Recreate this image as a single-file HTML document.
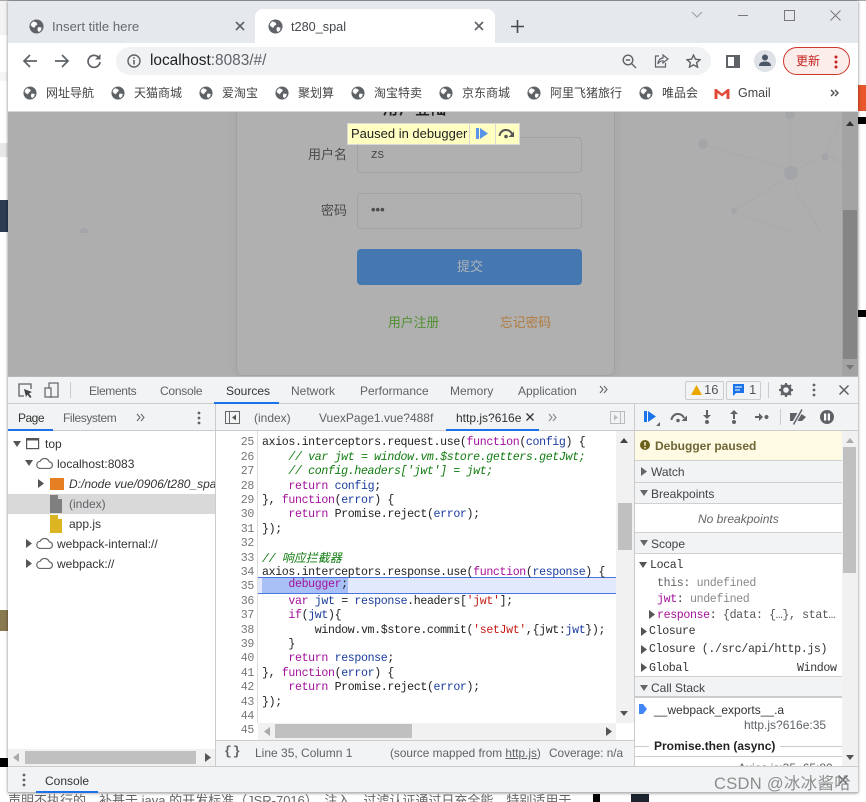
<!DOCTYPE html>
<html><head><meta charset="utf-8"><style>
html,body{margin:0;padding:0;width:866px;height:802px;overflow:hidden;background:#fff}
body{position:relative;font-family:"Liberation Sans","Noto Sans CJK SC",sans-serif;font-size:12px;color:#333}
.a,.t,svg{position:absolute}
.t{white-space:nowrap;line-height:16px}
.c{position:absolute;left:262px;margin-top:2px;white-space:pre;font:11.6px/14px "Liberation Mono","Noto Sans CJK SC",monospace;letter-spacing:-.36px;color:#222}
.n{position:absolute;left:225px;margin-top:2px;width:29px;text-align:right;font:11.6px/14px "Liberation Mono",monospace;letter-spacing:-.36px;color:#777}
.k{color:#a3109a}.v{color:#1a3d9c}.g{color:#107c10;font-style:italic}.s{color:#c41a16}
.m{position:absolute;white-space:pre;font:11.6px/14px "Liberation Mono",monospace;letter-spacing:-.36px;color:#333}
.h{position:absolute;left:635px;width:207px;background:#f1f3f4;border-top:1px solid #d0d0d0;border-bottom:1px solid #d0d0d0}
</style></head><body>
<svg width="0" height="0" style="left:0;top:0"><defs>
<symbol id="globe" viewBox="0 0 16 16"><circle cx="8" cy="8" r="7.5" fill="#5f6368"/><path d="M5 2.5l3 1.2 1 2-2 1.500-1.500 2.300L3 8 1.800 6.300C2.300 4.500 3.400 3.200 5 2.500zM10 8.500l3.500.7-.8 3-2.200 1.700-1.200-1.500-.2-2.200z" fill="#fff"/></symbol>
<symbol id="cloud" viewBox="0 0 16 10"><path d="M4 9.500h8.500a3 3 0 0 0 .3-6A4.500 4.500 0 0 0 4.500 3 3.300 3.300 0 0 0 4 9.500z" fill="#fff" stroke="#666" stroke-width="1.100"/></symbol>
</defs></svg>

<!-- outside bits -->
<div class="a" style="left:0;top:0;width:866px;height:1px;background:#a5a8ab"></div>
<div class="a" style="left:0;top:1px;width:8px;height:34px;background:#f3f3f3"></div>
<div class="a" style="left:0;top:72px;width:8px;height:9px;background:#f6f6f6"></div>
<div class="a" style="left:0;top:143px;width:8px;height:14px;background:#e8e8e8"></div>
<div class="a" style="left:0;top:200px;width:8px;height:32px;background:#2c3a52"></div>
<div class="a" style="left:0;top:610px;width:8px;height:21px;background:#8a7a50"></div>
<div class="a" style="left:0;top:758px;width:8px;height:9px;background:#000"></div>
<div class="a" style="left:858px;top:85px;width:8px;height:26px;background:#e8562a"></div>
<div class="a" style="left:858px;top:117px;width:8px;height:7px;background:#000"></div>
<div class="a" style="left:858px;top:310px;width:8px;height:7px;background:#000"></div>
<div class="t" style="left:8px;top:792px;font-size:13px;color:#666;height:10px;overflow:hidden;line-height:18px">声明不执行的，补基于 java 的开发标准（JSR-7016），注入、过滤认证通过日充全能，特别适用于</div>
<div class="a" style="left:593px;top:794px;width:7px;height:8px;background:#000"></div>
<div class="a" style="left:631px;top:794px;width:18px;height:8px;background:#1d2430"></div>

<!-- window -->
<div class="a" style="left:8px;top:1px;width:850px;height:792px;background:#fff;box-shadow:0 0 3px rgba(0,0,0,.5)"></div>
<!-- tab strip -->
<div class="a" style="left:8px;top:1px;width:850px;height:42px;background:#e5e8ec"></div>
<div class="a" style="left:255px;top:9px;width:240px;height:34px;background:#fff;border-radius:8px 8px 0 0"></div>
<svg style="left:29px;top:19px" width="15" height="15"><use href="#globe"/></svg>
<div class="t" style="left:52px;top:19px;font-size:13.2px;color:#666b70">Insert title here</div>
<svg style="left:235px;top:21px" width="10" height="10"><path d="M1 1l8 8M9 1l-8 8" stroke="#5f6368" stroke-width="1.6"/></svg>
<svg style="left:268px;top:19px" width="15" height="15"><use href="#globe"/></svg>
<div class="t" style="left:291px;top:19px;font-size:12.7px;color:#45484c">t280_spal</div>
<svg style="left:474px;top:21px" width="10" height="10"><path d="M1 1l8 8M9 1l-8 8" stroke="#5f6368" stroke-width="1.6"/></svg>
<svg style="left:511px;top:20px" width="13" height="13"><path d="M6.500 0v13M0 6.500h13" stroke="#474b50" stroke-width="1.6"/></svg>
<svg style="left:691px;top:11px" width="12" height="7"><path d="M1 1l5 5 5-5" fill="none" stroke="#9a9ea3"/></svg>
<div class="a" style="left:738px;top:15px;width:10px;height:1px;background:#777"></div>
<div class="a" style="left:784px;top:10px;width:9px;height:9px;border:1px solid #777"></div>
<svg style="left:830px;top:10px" width="11" height="11"><path d="M.5.5l10 10M10.500.5l-10 10" stroke="#777"/></svg>

<!-- toolbar -->
<svg style="left:22px;top:53px" width="16" height="16"><path d="M15 8H2M8 2L2 8l6 6" fill="none" stroke="#5f6368" stroke-width="1.7"/></svg>
<svg style="left:54px;top:53px" width="16" height="16"><path d="M1 8h13M8 2l6 6-6 6" fill="none" stroke="#5f6368" stroke-width="1.7"/></svg>
<svg style="left:86px;top:53px" width="16" height="16"><path d="M13 5A6 6 0 1 0 14 9" fill="none" stroke="#5f6368" stroke-width="1.7"/><path d="M14.500 1v5.500H9z" fill="#5f6368"/></svg>
<div class="a" style="left:116px;top:47px;width:595px;height:28px;background:#f0f2f4;border-radius:14px"></div>
<svg style="left:127px;top:54px" width="14" height="14"><circle cx="7" cy="7" r="6" fill="none" stroke="#5f6368" stroke-width="1.4"/><path d="M7 6v4.500M7 3.200v1.600" stroke="#5f6368" stroke-width="1.6"/></svg>
<div class="t" style="left:150px;top:53px;font-size:15.400px;color:#202124">localhost<span style="color:#5f6368">:8083/#/</span></div>
<svg style="left:622px;top:54px" width="15" height="15"><circle cx="6" cy="6" r="4.800" fill="none" stroke="#5f6368" stroke-width="1.400"/><path d="M9.500 9.500l4.500 4.500M3.800 6h4.400" stroke="#5f6368" stroke-width="1.400"/></svg>
<svg style="left:654px;top:54px" width="15" height="14"><path d="M5 2H1.500v11h10V9" fill="none" stroke="#5f6368" stroke-width="1.200"/><path d="M9 1l5 4-5 4V6.800C6.500 6.800 5 8 4 10c0-3.500 2-5.800 5-6z" fill="none" stroke="#5f6368" stroke-width="1.200"/></svg>
<svg style="left:686px;top:54px" width="15" height="14"><path d="M7.500 1l1.900 4.200 4.600.5-3.400 3 1 4.500-4.100-2.400-4.100 2.400 1-4.500L1 5.700l4.600-.5z" fill="none" stroke="#5f6368" stroke-width="1.400"/></svg>
<svg style="left:726px;top:55px" width="14" height="13"><rect x="1" y="1" width="12" height="11" fill="#fff" stroke="#5f6368" stroke-width="2"/><rect x="8" y="1" width="5" height="11" fill="#5f6368"/></svg>
<div class="a" style="left:754px;top:50px;width:22px;height:22px;border-radius:50%;background:#dee1e6"></div>
<svg style="left:759px;top:54px" width="12" height="13"><circle cx="6" cy="3.500" r="3" fill="#4a5568"/><path d="M0 12c0-3.500 3-4.500 6-4.500s6 1 6 4.500z" fill="#4a5568"/></svg>
<div class="a" style="left:783px;top:47px;width:65px;height:26px;border:1px solid #d0352b;border-radius:14px;background:#fcecea"></div>
<div class="t" style="left:796px;top:53px;font-size:12px;color:#c5221f">更新</div>
<svg style="left:834px;top:55px" width="4" height="14"><circle cx="2" cy="2" r="1.500" fill="#c5221f"/><circle cx="2" cy="7" r="1.500" fill="#c5221f"/><circle cx="2" cy="12" r="1.500" fill="#c5221f"/></svg>

<!-- bookmarks -->
<svg style="left:23px;top:86px" width="14" height="14"><use href="#globe"/></svg><div class="t" style="left:46px;top:85px;color:#444">网址导航</div>
<svg style="left:111px;top:86px" width="14" height="14"><use href="#globe"/></svg><div class="t" style="left:134px;top:85px;color:#444">天猫商城</div>
<svg style="left:199px;top:86px" width="14" height="14"><use href="#globe"/></svg><div class="t" style="left:222px;top:85px;color:#444">爱淘宝</div>
<svg style="left:275px;top:86px" width="14" height="14"><use href="#globe"/></svg><div class="t" style="left:298px;top:85px;color:#444">聚划算</div>
<svg style="left:351px;top:86px" width="14" height="14"><use href="#globe"/></svg><div class="t" style="left:374px;top:85px;color:#444">淘宝特卖</div>
<svg style="left:439px;top:86px" width="14" height="14"><use href="#globe"/></svg><div class="t" style="left:462px;top:85px;color:#444">京东商城</div>
<svg style="left:527px;top:86px" width="14" height="14"><use href="#globe"/></svg><div class="t" style="left:550px;top:85px;color:#444">阿里飞猪旅行</div>
<svg style="left:639px;top:86px" width="14" height="14"><use href="#globe"/></svg><div class="t" style="left:662px;top:85px;color:#444">唯品会</div>
<svg style="left:714px;top:88px" width="16" height="11"><path d="M.5 11V1h2L8 5.500 13.500 1h2v10h-3V5L8 8.500 3.500 5v6z" fill="#e0493a"/></svg>
<div class="t" style="left:738px;top:85px;font-size:12.500px;color:#444">Gmail</div>
<svg style="left:830px;top:89px" width="10" height="8"><path d="M1 1l3 3-3 3M5 1l3 3-3 3" fill="none" stroke="#555" stroke-width="1.500"/></svg>
<div class="a" style="left:8px;top:111px;width:850px;height:1px;background:#d5d5d5"></div>

<!-- page viewport -->
<div class="a" style="left:8px;top:112px;width:850px;height:264px;background:#aeaeae;overflow:hidden">
 <svg style="left:0;top:0" width="850" height="264">
  <g stroke="#a9a9aa" fill="none"><path d="M695 32l88 26M782 61L782 5M793 55l24-13M817 42l17 9M817 42l15-33M775 68l-49 31M726 99l58 22M786 75l27 46"/></g>
  <g fill="#a3a5a8"><circle cx="783" cy="61" r="7"/><circle cx="695" cy="32" r="5"/><circle cx="782" cy="2" r="5"/><circle cx="817" cy="45" r="3.500"/><circle cx="726" cy="99" r="3"/><circle cx="76" cy="121" r="5"/></g>
 </svg>
 <div class="a" style="left:60px;top:121px;width:40px;height:20px;background:#aeaeae"></div>
 <div class="a" style="left:228px;top:-10px;width:377px;height:272px;background:#b0b0b0;border:1px solid #a2a2a2;border-radius:7px;box-shadow:0 0 10px rgba(0,0,0,.05)"></div>
 <div class="t" style="left:375px;top:-12px;font-size:15px;font-weight:bold;line-height:20px;color:#222;letter-spacing:1px">用户登陆</div>
 <div class="t" style="left:300px;top:35px;font-size:13px;color:#4a4a4a">用户名</div>
 <div class="a" style="left:349px;top:25px;width:223px;height:34px;border:1px solid #a2a2a6;border-radius:4px"></div>
 <div class="t" style="left:363px;top:34px;font-size:13px;color:#4d4d4d">zs</div>
 <div class="t" style="left:313px;top:91px;font-size:13px;color:#4a4a4a">密码</div>
 <div class="a" style="left:349px;top:81px;width:223px;height:34px;border:1px solid #a2a2a6;border-radius:4px"></div>
 <div class="t" style="left:363px;top:90px;font-size:13px;font-weight:bold;color:#4d4d4d">•••</div>
 <div class="a" style="left:349px;top:137px;width:225px;height:36px;background:#4577b0;border-radius:4px"></div>
 <div class="t" style="left:449px;top:147px;font-size:13px;color:#aeb4bb">提交</div>
 <div class="t" style="left:380px;top:203px;font-size:12.800px;color:#4f8f2f">用户注册</div>
 <div class="t" style="left:492px;top:203px;font-size:12.800px;color:#b07a3e">忘记密码</div>
 <div class="a" style="left:834px;top:0;width:16px;height:264px;background:#a3a3a3"></div>
 <div class="a" style="left:835px;top:98px;width:14px;height:149px;background:#858585"></div>
 <svg style="left:838px;top:9px" width="8" height="5"><path d="M4 0l4 5H0z" fill="#333"/></svg>
 <svg style="left:838px;top:253px" width="8" height="5"><path d="M4 5L8 0H0z" fill="#777"/></svg>
</div>
<!-- paused bar -->
<div class="a" style="left:347px;top:123px;width:171px;height:20px;background:#ffffc2;border:1px solid #d8d8d8"></div>
<div class="a" style="left:469px;top:124px;width:1px;height:20px;background:#d8d8d8"></div>
<div class="a" style="left:495px;top:124px;width:1px;height:20px;background:#d8d8d8"></div>
<div class="t" style="left:351px;top:126px;font-size:13px;color:#222">Paused in debugger</div>
<svg style="left:476px;top:128px" width="13" height="11"><path d="M0 0h3v11H0zM4 0l8 5.500L4 11z" fill="#5a94e8"/></svg>
<svg style="left:498px;top:128px" width="17" height="11"><path d="M1.500 8A6.500 6.500 0 0 1 14 6" fill="none" stroke="#555" stroke-width="2"/><path d="M16 3.500V9h-5.500z" fill="#555"/><circle cx="8" cy="8.500" r="1.800" fill="#555"/></svg>

<!-- devtools -->
<div class="a" style="left:8px;top:376px;width:850px;height:1px;background:#b8b8b8"></div>
<div class="a" style="left:8px;top:377px;width:850px;height:26px;background:#f1f3f4;border-bottom:1px solid #ccc"></div>
<svg style="left:18px;top:383px" width="15" height="15"><path d="M6 13H1V1h12v5" fill="none" stroke="#5f6368" stroke-width="1.300"/><path d="M6 6l8 3-3 1.500L13.500 14l-1.500 1-2.500-3.500L8 14z" fill="#444"/></svg>
<svg style="left:44px;top:382px" width="15" height="16"><rect x="5" y="1" width="9" height="14" fill="none" stroke="#5f6368" stroke-width="1.200"/><rect x="1" y="6" width="6" height="9" fill="#f1f3f4" stroke="#5f6368" stroke-width="1.200"/></svg>
<div class="a" style="left:70px;top:382px;width:1px;height:16px;background:#ccc"></div>
<div class="t" style="left:89px;top:383px;color:#5f6368;letter-spacing:-.35px">Elements</div>
<div class="t" style="left:160px;top:383px;color:#5f6368;letter-spacing:-.25px">Console</div>
<div class="t" style="left:226px;top:383px;color:#333">Sources</div>
<div class="a" style="left:214px;top:402px;width:65px;height:2px;background:#1a73e8"></div>
<div class="t" style="left:291px;top:383px;color:#5f6368">Network</div>
<div class="t" style="left:360px;top:383px;color:#5f6368">Performance</div>
<div class="t" style="left:450px;top:383px;color:#5f6368">Memory</div>
<div class="t" style="left:518px;top:383px;color:#5f6368">Application</div>
<svg style="left:599px;top:385px" width="9" height="9"><path d="M1 1l3 3.500L1 8M5 1l3 3.500L5 8" fill="none" stroke="#666" stroke-width="1.100"/></svg>
<div class="a" style="left:685px;top:381px;width:37px;height:17px;border:1px solid #ccc;border-radius:2px"></div>
<svg style="left:691px;top:385px" width="11" height="10"><path d="M5.500 0L11 10H0z" fill="#e9a700"/></svg>
<div class="t" style="left:704px;top:382px;color:#555;font-size:13px">16</div>
<div class="a" style="left:726px;top:381px;width:33px;height:17px;border:1px solid #ccc;border-radius:2px"></div>
<svg style="left:733px;top:384px" width="11" height="12"><path d="M0 0h11v9H3l-3 3z" fill="#1a73e8"/><path d="M2 3h7M2 6h5" stroke="#fff"/></svg>
<div class="t" style="left:749px;top:382px;color:#555;font-size:13px">1</div>
<div class="a" style="left:768px;top:382px;width:1px;height:16px;background:#ccc"></div>
<svg style="left:779px;top:383px" width="14" height="14"><circle cx="7" cy="7" r="4.200" fill="none" stroke="#5f6368" stroke-width="2.800"/><path d="M7 0v3M7 11v3M0 7h3M11 7h3M2 2l2 2M10 10l2 2M12 2l-2 2M4 10l-2 2" stroke="#5f6368" stroke-width="2"/></svg>
<svg style="left:812px;top:383px" width="4" height="14"><circle cx="2" cy="2" r="1.400" fill="#5f6368"/><circle cx="2" cy="7" r="1.400" fill="#5f6368"/><circle cx="2" cy="12" r="1.400" fill="#5f6368"/></svg>
<svg style="left:839px;top:385px" width="10" height="10"><path d="M.5.5l9 9M9.500.5l-9 9" stroke="#5f6368" stroke-width="1.500"/></svg>

<div class="a" style="left:8px;top:404px;width:850px;height:26px;background:#f1f3f4;border-bottom:1px solid #ccc"></div>
<div class="t" style="left:18px;top:410px;color:#333;letter-spacing:-.5px">Page</div>
<div class="a" style="left:8px;top:429px;width:45px;height:2px;background:#1a73e8"></div>
<div class="t" style="left:63px;top:410px;color:#5f6368;letter-spacing:-.4px">Filesystem</div>
<svg style="left:136px;top:413px" width="9" height="9"><path d="M1 1l3 3.500L1 8M5 1l3 3.500L5 8" fill="none" stroke="#666" stroke-width="1.100"/></svg>
<svg style="left:197px;top:411px" width="4" height="14"><circle cx="2" cy="2" r="1.400" fill="#5f6368"/><circle cx="2" cy="7" r="1.400" fill="#5f6368"/><circle cx="2" cy="12" r="1.400" fill="#5f6368"/></svg>
<svg style="left:225px;top:411px" width="15" height="13"><rect x=".5" y=".5" width="14" height="12" fill="none" stroke="#666"/><path d="M4.500 .5v12" stroke="#666"/><path d="M11 3.500v6l-4-3z" fill="#555"/></svg>
<div class="t" style="left:254px;top:410px;color:#5f6368">(index)</div>
<div class="t" style="left:319px;top:410px;color:#5f6368">VuexPage1.vue?488f</div>
<div class="t" style="left:456px;top:410px;color:#333">http.js?616e</div>
<svg style="left:526px;top:413px" width="8" height="8"><path d="M.5.500l7 7M7.500.500l-7 7" stroke="#333" stroke-width="1.300"/></svg>
<div class="a" style="left:446px;top:429px;width:93px;height:2px;background:#1a73e8"></div>
<svg style="left:548px;top:413px" width="9" height="9"><path d="M1 1l3 3.500L1 8M5 1l3 3.500L5 8" fill="none" stroke="#888" stroke-width="1.100"/></svg>
<svg style="left:610px;top:411px" width="15" height="13"><rect x=".5" y=".5" width="14" height="12" fill="none" stroke="#bbb"/><path d="M10.500 .5v12" stroke="#bbb"/><path d="M4 3.500v6l4-3z" fill="#bbb"/></svg>
<div class="a" style="left:215px;top:404px;width:1px;height:362px;background:#ccc"></div>
<div class="a" style="left:634px;top:404px;width:1px;height:362px;background:#ccc"></div>

<!-- debugger toolbar -->
<svg style="left:644px;top:411px" width="18" height="16"><path d="M0 0h3v11H0zM4 0l8 5.500L4 11z" fill="#1a73e8"/><path d="M16 11v4h-4z" fill="#666"/></svg>
<svg style="left:670px;top:412px" width="18" height="11"><path d="M1.500 8A6.500 6.500 0 0 1 14 6" fill="none" stroke="#5f6368" stroke-width="2"/><path d="M17 3.500V9h-5.500z" fill="#5f6368"/><circle cx="8" cy="8.500" r="1.800" fill="#5f6368"/></svg>
<svg style="left:703px;top:410px" width="8" height="14"><path d="M3 0h2v5h3L4 9 0 5h3z" fill="#5f6368"/><circle cx="4" cy="12" r="2" fill="#5f6368"/></svg>
<svg style="left:730px;top:410px" width="8" height="14"><path d="M3 9h2V4h3L4 0 0 4h3z" fill="#5f6368"/><circle cx="4" cy="12" r="2" fill="#5f6368"/></svg>
<svg style="left:755px;top:413px" width="14" height="8"><path d="M0 3h4V0l4 4-4 4V5H0z" fill="#5f6368"/><circle cx="11.500" cy="4" r="2" fill="#5f6368"/></svg>
<div class="a" style="left:780px;top:409px;width:1px;height:16px;background:#ccc"></div>
<svg style="left:789px;top:409px" width="19" height="16"><path d="M1 4h10l6 4-4 4H1z" fill="#5f6368"/><path d="M4 16L13 0" stroke="#f1f3f4" stroke-width="4"/><path d="M4.500 15.500L13 .5" stroke="#5f6368" stroke-width="1.500"/></svg>
<svg style="left:820px;top:410px" width="14" height="14"><circle cx="7" cy="7" r="7" fill="#5f6368"/><path d="M4 3.500h2.200v7H4zM7.800 3.500H10v7H7.800z" fill="#fff"/></svg>

<!-- file tree -->
<div class="a" style="left:8px;top:494px;width:207px;height:20px;background:#d9d9d9"></div>
<svg style="left:13px;top:441px" width="9" height="6"><path d="M0 0h8L4 6z" fill="#555"/></svg>
<svg style="left:26px;top:438px" width="14" height="12"><rect x=".6" y=".6" width="12" height="10" fill="none" stroke="#555" stroke-width="1.200"/><path d="M0 1.500h13" stroke="#555" stroke-width="2"/></svg>
<div class="t" style="left:45px;top:436px;color:#333">top</div>
<svg style="left:25px;top:460px" width="9" height="6"><path d="M0 0h8L4 6z" fill="#555"/></svg>
<svg style="left:35px;top:458px" width="18" height="11"><use href="#cloud"/></svg>
<div class="t" style="left:57px;top:456px;color:#333">localhost:8083</div>
<svg style="left:38px;top:479px" width="6" height="9"><path d="M0 0l6 4.500L0 9z" fill="#555"/></svg>
<div class="a" style="left:50px;top:478px;width:14px;height:12px;background:#e67e22"></div>
<div class="t" style="left:69px;top:476px;width:146px;overflow:hidden;font-style:italic;color:#333">D:/node vue/0906/t280_spa</div>
<svg style="left:50px;top:495px" width="12" height="18"><path d="M0 0h8l4 4v14H0z" fill="#7f7f7f"/><path d="M8 0l4 4H8z" fill="#d9d9d9"/></svg>
<div class="t" style="left:69px;top:496px;color:#5f6368">(index)</div>
<svg style="left:50px;top:515px" width="12" height="18"><path d="M0 0h8l4 4v14H0z" fill="#dcb523"/><path d="M8 0l4 4H8z" fill="#fff"/></svg>
<div class="t" style="left:69px;top:516px;color:#333">app.js</div>
<svg style="left:26px;top:539px" width="6" height="9"><path d="M0 0l6 4.500L0 9z" fill="#555"/></svg>
<svg style="left:35px;top:538px" width="18" height="11"><use href="#cloud"/></svg>
<div class="t" style="left:57px;top:536px;color:#333">webpack-internal://</div>
<svg style="left:26px;top:559px" width="6" height="9"><path d="M0 0l6 4.500L0 9z" fill="#555"/></svg>
<svg style="left:35px;top:558px" width="18" height="11"><use href="#cloud"/></svg>
<div class="t" style="left:57px;top:556px;color:#333">webpack://</div>
<div class="a" style="left:8px;top:749px;width:207px;height:17px;background:#f1f1f1"></div>
<div class="a" style="left:25px;top:751px;width:171px;height:13px;background:#c0c0c0"></div>
<svg style="left:13px;top:753px" width="6" height="9"><path d="M6 0L0 4.500 6 9z" fill="#aaa"/></svg>
<svg style="left:205px;top:753px" width="6" height="9"><path d="M0 0l6 4.500L0 9z" fill="#555"/></svg>

<!-- code area -->
<div class="a" style="left:257px;top:431px;width:1px;height:292px;background:#ddd"></div>
<div class="a" style="left:258px;top:577px;width:358px;height:15px;background:#e3e9fc;border-top:1px solid #4a76e0;border-bottom:1px solid #4a76e0"></div>
<div class="a" style="left:262px;top:578px;width:86px;height:15px;background:#a9c0f6"></div>
<div class="a" style="left:216px;top:431px;width:400px;height:3px;overflow:hidden"><div class="c" style="left:46px;top:-13px"><span class="g">// 请求拦截器</span></div></div>
<div class="n" style="top:434px">25</div><div class="c" style="top:434px">axios.interceptors.request.use(<span class="k">function</span>(<span class="v">config</span>) {</div>
<div class="n" style="top:449px">26</div><div class="c g" style="top:449px">    // var jwt = window.vm.$store.getters.getJwt;</div>
<div class="n" style="top:463px">27</div><div class="c g" style="top:463px">    // config.headers['jwt'] = jwt;</div>
<div class="n" style="top:478px">28</div><div class="c" style="top:478px">    <span class="k">return</span> <span class="v">config</span>;</div>
<div class="n" style="top:492px">29</div><div class="c" style="top:492px">}, <span class="k">function</span>(<span class="v">error</span>) {</div>
<div class="n" style="top:506px">30</div><div class="c" style="top:506px">    <span class="k">return</span> Promise.reject(<span class="v">error</span>);</div>
<div class="n" style="top:521px">31</div><div class="c" style="top:521px">});</div>
<div class="n" style="top:535px">32</div>
<div class="n" style="top:550px">33</div><div class="c g" style="top:550px">// <span style="letter-spacing:0;font-size:12px">响应拦截器</span></div>
<div class="n" style="top:564px">34</div><div class="c" style="top:564px">axios.interceptors.response.use(<span class="k">function</span>(<span class="v">response</span>) {</div>
<div class="n" style="top:578px">35</div><div class="c" style="top:576px">    <span class="k">debugger</span>;</div>
<div class="n" style="top:593px">36</div><div class="c" style="top:593px">    <span class="k">var</span> <span class="v">jwt</span> = <span class="v">response</span>.headers[<span class="s">'jwt'</span>];</div>
<div class="n" style="top:607px">37</div><div class="c" style="top:607px">    <span class="k">if</span>(<span class="v">jwt</span>){</div>
<div class="n" style="top:622px">38</div><div class="c" style="top:622px">        window.vm.$store.commit(<span class="s">'setJwt'</span>,{jwt:<span class="v">jwt</span>});</div>
<div class="n" style="top:636px">39</div><div class="c" style="top:636px">    }</div>
<div class="n" style="top:650px">40</div><div class="c" style="top:650px">    <span class="k">return</span> <span class="v">response</span>;</div>
<div class="n" style="top:665px">41</div><div class="c" style="top:665px">}, <span class="k">function</span>(<span class="v">error</span>) {</div>
<div class="n" style="top:679px">42</div><div class="c" style="top:679px">    <span class="k">return</span> Promise.reject(<span class="v">error</span>);</div>
<div class="n" style="top:694px">43</div><div class="c" style="top:694px">});</div>
<div class="n" style="top:708px">44</div>
<div class="n" style="top:722px">45</div>
<div class="a" style="left:616px;top:431px;width:18px;height:292px;background:#f1f1f1"></div>
<div class="a" style="left:618px;top:503px;width:14px;height:47px;background:#c0c0c0"></div>
<svg style="left:620px;top:438px" width="8" height="5"><path d="M4 0l4 5H0z" fill="#444"/></svg>
<svg style="left:620px;top:711px" width="8" height="5"><path d="M4 5L8 0H0z" fill="#555"/></svg>
<div class="a" style="left:258px;top:723px;width:358px;height:17px;background:#f1f1f1"></div>
<div class="a" style="left:275px;top:724px;width:137px;height:14px;background:#c0c0c0"></div>
<svg style="left:264px;top:727px" width="6" height="9"><path d="M6 0L0 4.500 6 9z" fill="#aaa"/></svg>
<svg style="left:606px;top:727px" width="6" height="9"><path d="M0 0l6 4.500L0 9z" fill="#555"/></svg>
<div class="a" style="left:216px;top:740px;width:418px;height:25px;background:#f1f3f4;border-top:1px solid #ccc"></div>
<div class="t" style="left:224px;top:744px;font:bold 13px/16px 'Liberation Mono',monospace;color:#5f6368;letter-spacing:1px">{}</div>
<div class="t" style="left:255px;top:745px;color:#5f6368">Line 35, Column 1</div>
<div class="t" style="left:390px;top:745px;color:#5f6368;font-size:11.800px">(source mapped from <u>http.js</u>)</div>
<div class="t" style="left:549px;top:745px;color:#5f6368;font-size:11.800px">Coverage: n/a</div>

<!-- right panel -->
<div class="a" style="left:635px;top:431px;width:207px;height:29px;background:#fffae3"></div>
<svg style="left:640px;top:440px" width="10" height="10"><circle cx="5" cy="5" r="5" fill="#6b5f1a"/><path d="M5 2v3.800M5 7v1.500" stroke="#fffae3" stroke-width="1.400"/></svg>
<div class="t" style="left:655px;top:438px;font-weight:bold;color:#6e6536">Debugger paused</div>
<div class="h" style="top:460px;height:21px"></div>
<svg style="left:641px;top:467px" width="6" height="9"><path d="M0 0l6 4.500L0 9z" fill="#666"/></svg>
<div class="t" style="left:651px;top:464px;color:#444">Watch</div>
<div class="h" style="top:482px;height:20px"></div>
<svg style="left:640px;top:490px" width="9" height="6"><path d="M0 0h8L4 6z" fill="#666"/></svg>
<div class="t" style="left:651px;top:486px;color:#444">Breakpoints</div>
<div class="t" style="left:698px;top:511px;font-style:italic;color:#666">No breakpoints</div>
<div class="h" style="top:532px;height:20px"></div>
<svg style="left:640px;top:540px" width="9" height="6"><path d="M0 0h8L4 6z" fill="#666"/></svg>
<div class="t" style="left:651px;top:536px;color:#444">Scope</div>
<svg style="left:639px;top:562px" width="9" height="6"><path d="M0 0h8L4 6z" fill="#555"/></svg>
<div class="m" style="left:650px;top:559px">Local</div>
<div class="m" style="left:657px;top:577px;color:#5f6368">this: <span style="color:#888">undefined</span></div>
<div class="m" style="left:657px;top:593px"><span class="k">jwt</span>: <span style="color:#888">undefined</span></div>
<svg style="left:649px;top:610px" width="6" height="9"><path d="M0 0l6 4.500L0 9z" fill="#555"/></svg>
<div class="m" style="left:657px;top:609px"><span class="k">response</span>: <span style="color:#555">{data: {…}, stat…</span></div>
<svg style="left:641px;top:627px" width="6" height="9"><path d="M0 0l6 4.500L0 9z" fill="#555"/></svg>
<div class="m" style="left:649px;top:625px">Closure</div>
<svg style="left:641px;top:645px" width="6" height="9"><path d="M0 0l6 4.500L0 9z" fill="#555"/></svg>
<div class="m" style="left:649px;top:643px">Closure (./src/api/http.js)</div>
<svg style="left:641px;top:663px" width="6" height="9"><path d="M0 0l6 4.500L0 9z" fill="#555"/></svg>
<div class="m" style="left:649px;top:662px">Global</div>
<div class="m" style="left:797px;top:662px">Window</div>
<div class="h" style="top:676px;height:19px;border-bottom:2px solid #ccc"></div>
<svg style="left:640px;top:685px" width="9" height="6"><path d="M0 0h8L4 6z" fill="#666"/></svg>
<div class="t" style="left:651px;top:680px;color:#444">Call Stack</div>
<svg style="left:639px;top:704px" width="8" height="10"><path d="M0 0h4l4 5-4 5H0z" fill="#4285f4"/></svg>
<div class="t" style="left:654px;top:702px;color:#333">__webpack_exports__.a</div>
<div class="t" style="left:744px;top:717px;color:#5f6368">http.js?616e:35</div>
<div class="a" style="left:635px;top:746px;width:207px;height:1px;background:#ccc"></div>
<div class="t" style="left:649px;top:738px;padding:0 5px;background:#fff;font-weight:bold;color:#222">Promise.then (async)</div>
<div class="a" style="left:635px;top:756px;width:207px;height:1px;background:#ccc"></div>
<div class="a" style="left:635px;top:757px;width:207px;height:9px;overflow:hidden"><div class="t" style="left:103px;top:3px;color:#5f6368">Axios.js:35, 65:80</div></div>
<div class="a" style="left:842px;top:431px;width:16px;height:335px;background:#f1f1f1"></div>
<div class="a" style="left:843px;top:447px;width:13px;height:126px;background:#c0c0c0"></div>
<svg style="left:846px;top:438px" width="8" height="5"><path d="M4 0l4 5H0z" fill="#aaa"/></svg>
<svg style="left:846px;top:755px" width="8" height="5"><path d="M4 5L8 0H0z" fill="#555"/></svg>

<!-- drawer -->
<div class="a" style="left:8px;top:766px;width:850px;height:27px;background:#f1f3f4;border-top:1px solid #ccc;box-sizing:border-box;border-bottom:1px solid #bbb"></div>
<svg style="left:22px;top:773px" width="4" height="14"><circle cx="2" cy="2" r="1.400" fill="#5f6368"/><circle cx="2" cy="7" r="1.400" fill="#5f6368"/><circle cx="2" cy="12" r="1.400" fill="#5f6368"/></svg>
<div class="t" style="left:45px;top:773px;color:#333">Console</div>
<div class="a" style="left:36px;top:791px;width:62px;height:2px;background:#1a73e8"></div>
<svg style="left:838px;top:775px" width="10" height="10"><path d="M.5.5l9 9M9.500.5l-9 9" stroke="#5f6368" stroke-width="1.500"/></svg>
<div class="t" style="left:714px;top:774px;font-size:16.500px;line-height:20px;color:#8d8d8d;letter-spacing:.3px">CSDN @冰冰酱哈</div>
</body></html>
